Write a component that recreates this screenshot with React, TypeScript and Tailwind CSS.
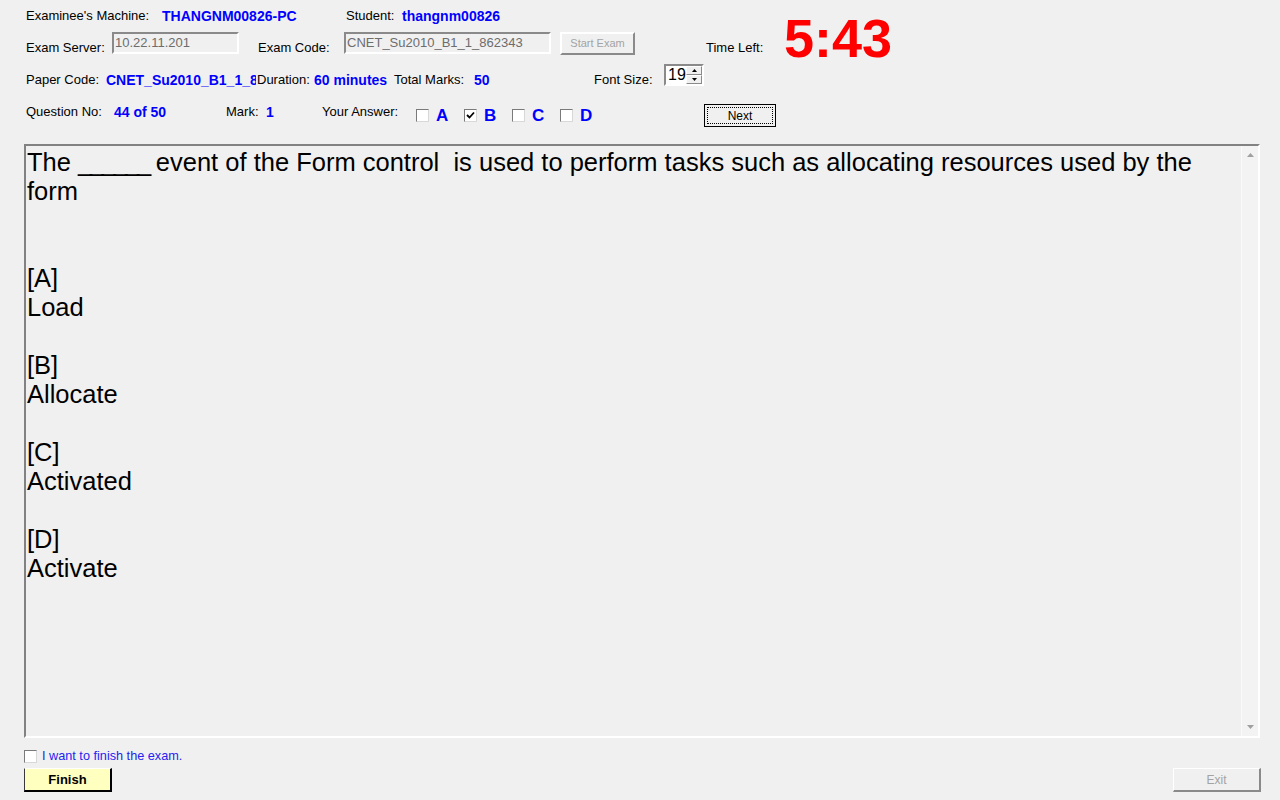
import { useState } from "react";

const answers = ["A", "B", "C", "D"];

const options = [
  { key: "A", text: "Load" },
  { key: "B", text: "Allocate" },
  { key: "C", text: "Activated" },
  { key: "D", text: "Activate" },
];

function CheckBox({ checked, onClick }: { checked: boolean; onClick?: () => void }) {
  return (
    <div
      onClick={onClick}
      className="w-[13px] h-[13px] shrink-0 bg-white border border-t-[#7a7a7a] border-l-[#7a7a7a] border-b-[#d8d8d8] border-r-[#d8d8d8] flex items-center justify-center"
    >
      {checked && (
        <svg width="9" height="9" viewBox="0 0 9 9">
          <path d="M1 4 L3.5 6.5 L8 1.5" fill="none" stroke="#000" strokeWidth="1.8" />
        </svg>
      )}
    </div>
  );
}

export default function App() {
  const [picked, setPicked] = useState<string[]>(["B"]);
  const [finish, setFinish] = useState(false);

  const toggle = (a: string) =>
    setPicked(picked.includes(a) ? picked.filter((p) => p !== a) : [...picked, a]);

  const label = "leading-[16px] mt-[8px] shrink-0 whitespace-nowrap";
  const value = "leading-[16px] mt-[8px] shrink-0 whitespace-nowrap font-bold text-[14px] text-[#0000ff]";

  return (
    <div className="w-[1280px] h-[800px] overflow-hidden bg-[#f0f0f0] pl-[24px] pr-[19px] text-[13px] text-black font-['Liberation_Sans',Arial,sans-serif] flex flex-col">
      {/* row 1 */}
      <div className="h-[32px] flex items-start">
        <div className={`${label} ml-[2px] w-[136px]`}>Examinee's Machine:</div>
        <div className={`${value} w-[184px]`}>THANGNM00826-PC</div>
        <div className={`${label} w-[56px]`}>Student:</div>
        <div className={value}>thangnm00826</div>
      </div>

      {/* row 2 */}
      <div className="h-[32px] flex items-start">
        <div className={`${label} ml-[2px] w-[86px]`}>Exam Server:</div>
        <div className="w-[127px] h-[22px] shrink-0 border-2 border-t-[#8a8a8a] border-l-[#8a8a8a] border-b-white border-r-white text-[#6d6d6d] leading-[18px] pl-[1px]">
          10.22.11.201
        </div>
        <div className={`${label} ml-[19px] w-[86px]`}>Exam Code:</div>
        <div className="w-[207px] h-[22px] shrink-0 border-2 border-t-[#8a8a8a] border-l-[#8a8a8a] border-b-white border-r-white text-[#6d6d6d] leading-[18px] pl-[1px]">
          CNET_Su2010_B1_1_862343
        </div>
        <button
          disabled
          className="ml-[9px] w-[75px] h-[23px] shrink-0 border-2 border-t-white border-l-white border-b-[#8a8a8a] border-r-[#8a8a8a] text-[11px] text-[#a3a3a3] leading-none"
        >
          Start Exam
        </button>
        <div className={`${label} ml-[71px] w-[78px]`}>Time Left:</div>
        <div className="mt-[-21px] text-[54px] leading-none font-bold text-[#ff0000]">5:43</div>
      </div>

      {/* row 3 */}
      <div className="h-[32px] flex items-start">
        <div className={`${label} ml-[2px] w-[80px]`}>Paper Code:</div>
        <div className={`${value} w-[150px] overflow-hidden`}>CNET_Su2010_B1_1_862343</div>
        <div className={`${label} ml-[1px] w-[57px]`}>Duration:</div>
        <div className={`${value} w-[80px]`}>60 minutes</div>
        <div className={`${label} w-[80px]`}>Total Marks:</div>
        <div className={`${value} w-[120px]`}>50</div>
        <div className={`${label} w-[70px]`}>Font Size:</div>
        <div className="w-[40px] h-[22px] shrink-0 bg-white border-2 border-t-[#8a8a8a] border-l-[#8a8a8a] border-b-white border-r-white flex">
          <div className="flex-1 text-[16px] leading-[18px] pl-[2px]">19</div>
          <div className="w-[16px] flex flex-col">
            <div className="flex-1 bg-[#f0f0f0] border border-t-white border-l-white border-b-[#8a8a8a] border-r-[#8a8a8a] flex items-center justify-center">
              <svg width="5" height="3" viewBox="0 0 5 3">
                <path d="M0 3 L2.5 0 L5 3 Z" fill="#000" />
              </svg>
            </div>
            <div className="flex-1 bg-[#f0f0f0] border border-t-white border-l-white border-b-[#8a8a8a] border-r-[#8a8a8a] flex items-center justify-center">
              <svg width="5" height="3" viewBox="0 0 5 3">
                <path d="M0 0 L2.5 3 L5 0 Z" fill="#000" />
              </svg>
            </div>
          </div>
        </div>
      </div>

      {/* row 4 */}
      <div className="h-[48px] flex items-start">
        <div className={`${label} ml-[2px] w-[88px]`}>Question No:</div>
        <div className={`${value} w-[112px]`}>44 of 50</div>
        <div className={`${label} w-[40px]`}>Mark:</div>
        <div className={`${value} w-[56px]`}>1</div>
        <div className={`${label} w-[94px]`}>Your Answer:</div>
        {answers.map((a) => (
          <div key={a} className="w-[48px] shrink-0 flex items-start">
            <div className="mt-[13px]">
              <CheckBox checked={picked.includes(a)} onClick={() => toggle(a)} />
            </div>
            <div className="ml-[7px] mt-[10px] text-[17px] leading-[20px] font-bold text-[#0000ff]">{a}</div>
          </div>
        ))}
        <button className="ml-[96px] mt-[8px] w-[72px] h-[23px] shrink-0 border border-black bg-[#f0f0f0] p-[2px]">
          <div className="w-full h-full border border-dotted border-black flex items-center justify-center text-[12px] leading-none">
            Next
          </div>
        </button>
      </div>

      {/* question box */}
      <div className="w-[1236px] h-[594px] shrink-0 border-2 border-t-[#828282] border-l-[#828282] border-b-white border-r-white flex">
        <div className="flex-1 pt-[2px] pl-[1px] text-[25.5px] leading-[29px] whitespace-pre-wrap font-['Liberation_Sans',Arial,sans-serif]">
          <div>
            The <span className="tracking-[-2.4px]">______</span> event of the Form control  is used to perform tasks such as allocating resources used by the form
          </div>
          <div className="h-[29px]" />
          <div className="h-[29px]" />
          {options.map((o) => (
            <div key={o.key}>
              <div>[{o.key}]</div>
              <div>{o.text}</div>
              <div className="h-[29px]" />
            </div>
          ))}
        </div>
        <div className="w-[17px] bg-[#f3f3f3] border-l border-[#fafafa] flex flex-col items-center justify-between py-[7px]">
          <svg width="7" height="4" viewBox="0 0 7 4">
            <path d="M0 4 L3.5 0 L7 4 Z" fill="#a0a0a0" />
          </svg>
          <svg width="7" height="4" viewBox="0 0 7 4">
            <path d="M0 0 L3.5 4 L7 0 Z" fill="#a0a0a0" />
          </svg>
        </div>
      </div>

      {/* finish checkbox */}
      <div className="mt-[10px] h-[16px] flex items-center">
        <CheckBox checked={finish} onClick={() => setFinish(!finish)} />
        <span className="ml-[5px] text-[12.7px] text-[#2424f0] leading-[16px]">I want to finish the exam.</span>
      </div>

      {/* buttons */}
      <div className="mt-[4px] flex">
        <button className="w-[88px] h-[24px] bg-[#ffffc0] border border-t-white border-l-[#3a3a3a] border-b-2 border-r-2 border-b-black border-r-black font-bold text-[13px] leading-none">
          Finish
        </button>
        <button
          disabled
          className="ml-auto w-[88px] h-[24px] bg-[#f0f0f0] border border-t-white border-l-white border-b-2 border-r-2 border-b-[#8a8a8a] border-r-[#8a8a8a] text-[12px] text-[#a3a3a3] leading-none"
        >
          Exit
        </button>
      </div>
    </div>
  );
}
